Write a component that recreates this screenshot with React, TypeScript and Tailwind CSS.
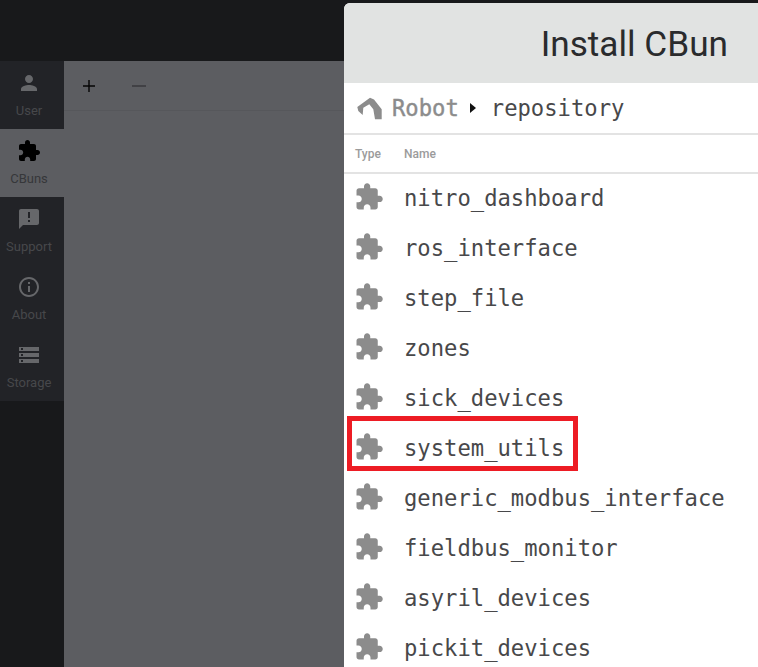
import {FC} from 'react'

const EXTENSION = 'M20.5 11H19V7c0-1.1-.9-2-2-2h-4V3.5C13 2.12 11.88 1 10.5 1S8 2.12 8 3.5V5H4c-1.1 0-1.99.9-1.99 2v3.8H3.5c1.49 0 2.7 1.21 2.7 2.7s-1.21 2.7-2.7 2.7H2V20c0 1.1.9 2 2 2h3.8v-1.5c0-1.49 1.21-2.7 2.7-2.7 1.49 0 2.7 1.21 2.7 2.7V22H17c1.1 0 2-.9 2-2v-4h1.5c1.38 0 2.5-1.12 2.5-2.5S21.88 11 20.5 11z'

const cbuns = [
  'nitro_dashboard',
  'ros_interface',
  'step_file',
  'zones',
  'sick_devices',
  'system_utils',
  'generic_modbus_interface',
  'fieldbus_monitor',
  'asyril_devices',
  'pickit_devices',
]

const Puzzle: FC<{className: string}> = ({className}) => (
  <svg viewBox="0 0 24 24" className={className} fill="currentColor"><path d={EXTENSION}/></svg>
)

const PersonIcon = () => (
  <svg viewBox="0 0 24 24" className="w-[24px] h-[24px]" fill="currentColor">
    <path d="M12 12c2.21 0 4-1.79 4-4s-1.79-4-4-4-4 1.79-4 4 1.79 4 4 4zm0 2c-2.67 0-8 1.34-8 4v2h16v-2c0-2.66-5.33-4-8-4z"/>
  </svg>
)

const SupportIcon = () => (
  <svg viewBox="0 0 24 24" className="w-[24px] h-[24px]" fill="currentColor">
    <path d="M20 2H4c-1.1 0-1.99.9-1.99 2L2 22l4-4h14c1.1 0 2-.9 2-2V4c0-1.1-.9-2-2-2zm-7 9h-2V5h2v6zm0 4h-2v-2h2v2z"/>
  </svg>
)

const InfoIcon = () => (
  <svg viewBox="0 0 24 24" className="w-[24px] h-[24px]" fill="currentColor">
    <path d="M11 7h2v2h-2zm0 4h2v6h-2zm1-9C6.48 2 2 6.48 2 12s4.48 10 10 10 10-4.48 10-10S17.52 2 12 2zm0 18c-4.41 0-8-3.59-8-8s3.59-8 8-8 8 3.59 8 8-3.59 8-8 8z"/>
  </svg>
)

const StorageIcon = () => (
  <svg viewBox="0 0 24 24" className="w-[24px] h-[24px]" fill="currentColor">
    <path d="M2 20h20v-4H2v4zm2-3h2v2H4v-2zM2 4v4h20V4H2zm4 3H4V5h2v2zm-4 7h20v-4H2v4zm2-3h2v2H4v-2z"/>
  </svg>
)

const NavItem: FC<{label: string, icon: React.ReactNode, active?: boolean}> = ({label, icon, active}) => (
  <div className={`h-[68px] flex flex-col items-center pt-[10px] pr-[6px] ${active ? 'bg-[#5c5d61] text-[#000000]' : 'bg-[#222327] text-[#66676a]'}`}>
    {icon}
    <span className={`text-[13px] leading-[15px] mt-[8px] ${active ? 'text-[#36373a]' : 'text-[#47484b]'}`}>{label}</span>
  </div>
)

export default function App() {
  return (
    <div className="relative w-[758px] h-[667px] overflow-hidden bg-[#18191b] font-['Roboto',sans-serif]">
      <div className="h-[61px]"/>
      <div className="flex h-[606px]">
        <div className="w-[64px]">
          <NavItem label="User" icon={<PersonIcon/>}/>
          <NavItem label="CBuns" active icon={<Puzzle className="w-[24px] h-[24px]"/>}/>
          <NavItem label="Support" icon={<SupportIcon/>}/>
          <NavItem label="About" icon={<InfoIcon/>}/>
          <NavItem label="Storage" icon={<StorageIcon/>}/>
        </div>
        <div className="flex-1 bg-[#5c5d61]">
          <div className="h-[50px] flex items-center border-b border-[#56575b] pl-[18px] gap-[36px]">
            <svg viewBox="0 0 14 14" className="w-[14px] h-[14px] text-[#050505]" fill="none" stroke="currentColor" strokeWidth="1.4"><path d="M7 1v12M1 7h12"/></svg>
            <svg viewBox="0 0 14 14" className="w-[14px] h-[14px] text-[#35363a]" fill="none" stroke="currentColor" strokeWidth="1.4"><path d="M0 7h14"/></svg>
          </div>
        </div>
      </div>

      <div className="absolute left-[344px] top-[3px] w-[414px] h-[664px] bg-white rounded-tl-[6px] overflow-hidden">
        <div className="h-[80px] bg-[#e1e3e2] flex items-center justify-end pr-[30px] pt-[3px] text-[35.2px] text-[#2a2b2d]">
          Install CBun
        </div>
        <div className="h-[50px] flex items-center pl-[13px] font-['DejaVu_Sans_Mono',monospace] text-[22.2px] text-[#48484a]">
          <svg viewBox="0 0 26 23" className="w-[26px] h-[23px] text-[#8c8c8c]" fill="currentColor">
            <path d="M0.3 10L13 0.7L17 2.5L24.7 12.3V22.3H18L16.3 12.3L12.3 7.3L6.3 10.7L5.7 18L1.3 14Z"/>
          </svg>
          <span className="ml-[9px] mt-[2px] text-[#8c8c8c] [-webkit-text-stroke:0.4px_#8c8c8c]">Robot</span>
          <svg viewBox="0 0 8 12" className="ml-[10px] w-[8px] h-[12px] text-[#111111]" fill="currentColor"><path d="M1 1l6 5-6 5z"/></svg>
          <span className="ml-[14px] mt-[2px]">repository</span>
        </div>
        <div className="h-[41px] flex items-center border-y-2 border-[#e3e3e3] text-[12px] font-medium text-[#9b9b9b]">
          <span className="w-[60px] pl-[11px]">Type</span>
          <span>Name</span>
        </div>
        <div className="-mt-[2px]">
          {cbuns.map((name) => (
            <div key={name} className="h-[50px] flex items-center pl-[10px] font-['DejaVu_Sans_Mono',monospace] text-[22.2px] text-[#48484a]">
              <Puzzle className="w-[30px] h-[30px] text-[#8c8c8c]"/>
              <span className="ml-[20px] mt-[3px]">{name}</span>
            </div>
          ))}
        </div>
      </div>

      <div className="absolute left-[347px] top-[416px] w-[231px] h-[55px] border-[5px] border-[#ed1c24]"/>
    </div>
  )
}
